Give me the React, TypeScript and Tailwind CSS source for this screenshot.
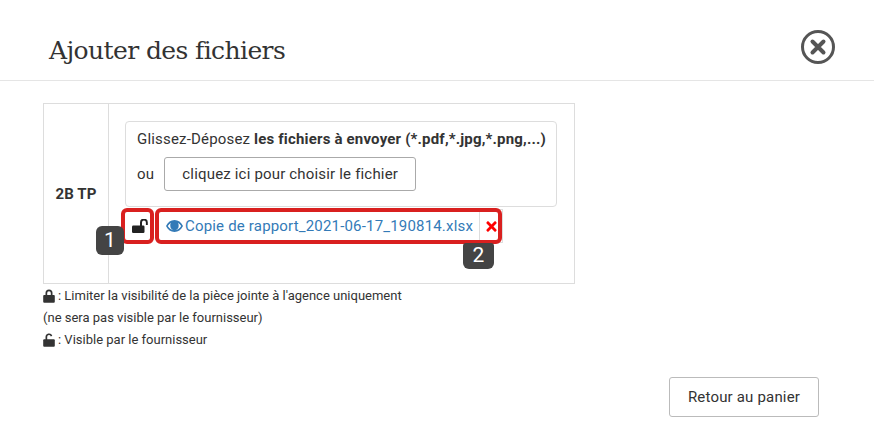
import React from "react";
import { FaTimes } from "react-icons/fa";

function Lock({ className }: { className?: string }) {
  return (
    <svg viewBox="0 0 12 14" className={className} fill="#333333">
      <path d="M2.500 6.500V4a3.500 3.500 0 0 1 7 0v2.500H7.800V4a1.800 1.800 0 0 0-3.600 0v2.500z" />
      <rect x="0.200" y="6" width="11.600" height="7.800" rx="1" />
    </svg>
  );
}

function Unlock({ className }: { className?: string }) {
  return (
    <svg viewBox="0 0 12 14" className={className} fill="#333333">
      <path d="M2.500 7V4a3.500 3.500 0 0 1 6.800-1.200L7.800 3.500A1.800 1.800 0 0 0 4.200 4v3z" />
      <rect x="0.200" y="6.200" width="11.600" height="7.600" rx="1" />
    </svg>
  );
}

function UnlockBig({ className }: { className?: string }) {
  return (
    <svg viewBox="0 0 16 14" className={className} fill="#222222">
      <path d="M8 7V3.500a3.800 3.800 0 0 1 7.800 0V6h-1.900V3.500a1.900 1.900 0 0 0-3.900 0V7z" />
      <rect x="0" y="6.500" width="12.500" height="7.500" rx="1.200" />
    </svg>
  );
}

function Eye({ className }: { className?: string }) {
  return (
    <svg viewBox="0 0 17 12" className={className} fill="#337ab7">
      <path fillRule="evenodd" d="M8.500 0C4.800 0 1.800 2.300 0 6c1.800 3.700 4.800 6 8.500 6s6.700-2.300 8.500-6c-1.800-3.700-4.800-6-8.500-6zM1.800 6c.8-1.300 1.900-2.500 3.200-3.300A4.300 4.300 0 0 0 4.300 6c0 2.400 1.900 4.300 4.200 4.300s4.200-1.900 4.200-4.300c0-1.200-.2-2.300-.7-3.300 1.300.8 2.400 2 3.200 3.300-1.500 2.400-3.800 4.300-6.700 4.300S3.300 8.400 1.800 6z" />
      <circle cx="8.500" cy="5.500" r="3" />
    </svg>
  );
}

export default function App() {
  return (
    <div className="w-[874px] h-[439px] bg-white overflow-hidden font-['Roboto',sans-serif] text-[#333333]">
      <div className="h-[81px] border-b border-[#e5e5e5] flex items-start justify-between pl-[49px] pr-[38px]">
        <h1 className="font-['DejaVu_Serif',serif] text-[25px] text-[#333333] tracking-[-0.6px] leading-[32px] mt-[35px]">Ajouter des fichiers</h1>
        <svg width="36" height="36" viewBox="0 0 36 36" className="mt-[29px]">
          <circle cx="18" cy="18" r="15.500" fill="none" stroke="#555555" strokeWidth="3" />
          <path d="M12.500 12.500 L23.500 23.500 M23.500 12.500 L12.500 23.500" stroke="#555555" strokeWidth="4" strokeLinecap="round" />
        </svg>
      </div>
      <div className="pl-[43px] pt-[22px]">
        <div className="w-[532px] h-[181px] border border-[#dddddd] flex">
          <div className="w-[65px] border-r border-[#dddddd] flex items-center justify-center font-bold text-[15px] tracking-[0.1px] pt-[2px]">2B TP</div>
          <div className="relative flex-1 pl-[16px] pt-[17px]">
            <div className="w-[432px] h-[86px] border border-[#dddddd] rounded-[4px] pl-[11px] pt-[7px]">
              <p className="text-[15px] leading-[20px] tracking-[0.18px]">Glissez-Déposez <b>les fichiers à envoyer (*.pdf,*.jpg,*.png,...)</b></p>
              <div className="flex items-center gap-[10px] mt-[8px]">
                <span className="text-[15px] tracking-[0.18px]">ou</span>
                <div className="w-[252px] h-[34px] border border-[#aaaaaa] rounded-[3px] flex items-center justify-center text-[15px] tracking-[0.18px]">cliquez ici pour choisir le fichier</div>
              </div>
            </div>
            <div className="flex items-center mt-[1px] ml-[1px] h-[36px]">
              <div className="w-[30px] flex justify-center pr-[2px]"><UnlockBig className="w-[16px] h-[14px] mb-[1px]" /></div>
              <div className="ml-[2px] w-[345px] h-[34px] border border-[#dddddd] flex items-center">
                <a className="flex-1 flex items-center pl-[7px] gap-[2px] text-[#337ab7] text-[15px] tracking-[0.18px]">
                  <Eye className="w-[17px] h-[12px]" />Copie de rapport_2021-06-17_190814.xlsx
                </a>
                <div className="w-[23px] self-stretch border-l border-[#dddddd] flex items-center justify-center"><FaTimes className="text-[#ff0000] text-[15px]" /></div>
              </div>
            </div>
            <div className="absolute left-[12px] top-[104px] w-[33px] h-[36px] border-[4px] border-[#d9201f] rounded-[6px]" />
            <div className="absolute left-[46px] top-[104px] w-[347px] h-[36px] border-[4px] border-[#d9201f] rounded-[6px]" />
            <div className="absolute left-[-13px] top-[122px] w-[28px] h-[29px] bg-[#444444] rounded-[6px] text-white text-[21px] flex items-center justify-center">1</div>
            <div className="absolute left-[354px] top-[139px] w-[31px] h-[26px] bg-[#444444] rounded-b-[6px] rounded-t-[3px] text-white text-[21px] flex items-center justify-center">2</div>
          </div>
        </div>
        <div className="text-[13px] leading-[22px] mt-[1px]">
          <div className="flex items-center gap-[3px]"><Lock className="w-[12px] h-[14px]" /><span>: Limiter la visibilité de la pièce jointe à l'agence uniquement</span></div>
          <div>(ne sera pas visible par le fournisseur)</div>
          <div className="flex items-center gap-[3px]"><Unlock className="w-[12px] h-[14px]" /><span>: Visible par le fournisseur</span></div>
        </div>
      </div>
      <div className="flex justify-end pr-[55px] mt-[26px]">
        <div className="w-[150px] h-[40px] border border-[#bbbbbb] rounded-[3px] flex items-center justify-center text-[15px] tracking-[0.18px]">Retour au panier</div>
      </div>
    </div>
  );
}
